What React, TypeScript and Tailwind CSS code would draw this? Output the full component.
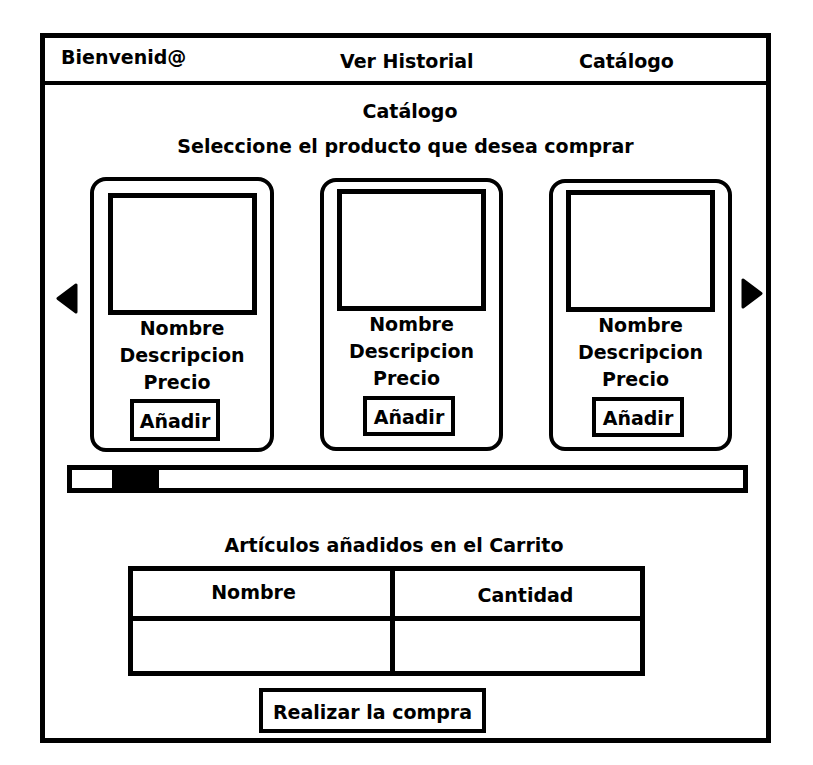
const cards = [
  { key: "a", box: "mt-0 h-[275px] w-[184px]", img: "mt-[12px]", btn: "ml-[36px] h-[42px] w-[90px] mt-[3px]" },
  { key: "b", box: "mt-[1px] h-[273px] w-[183px]", img: "mt-[7px]", btn: "ml-[39px] h-[40px] w-[92px] mt-[4px]" },
  { key: "c", box: "mt-[2px] h-[272px] w-[183px]", img: "mt-[7px]", btn: "ml-[39px] h-[40px] w-[92px] mt-[4px]" },
];

function Arrow({ dir }: { dir: "left" | "right" }) {
  return (
    <svg width="22" height="31" viewBox="0 0 22 31" className="block">
      {dir === "left" ? (
        <polygon points="2,15.5 20,2 20,29" fill="black" stroke="black" strokeWidth="3" strokeLinejoin="round" />
      ) : (
        <polygon points="20,15.5 2,2 2,29" fill="black" stroke="black" strokeWidth="3" strokeLinejoin="round" />
      )}
    </svg>
  );
}

function ProductCard({ box, img, btn }: { box: string; img: string; btn: string }) {
  return (
    <div className={`flex flex-col rounded-[16px] border-4 border-black ${box}`}>
      <div className={`mx-auto h-[122px] w-[149px] border-[5px] border-black ${img}`} />
      <div className="text-center leading-[27px]">
        <p>Nombre</p>
        <p>Descripcion</p>
        <p className="pr-[10px]">Precio</p>
      </div>
      <div className={`flex items-center justify-center border-4 border-black pt-[2px] ${btn}`}>
        Añadir
      </div>
    </div>
  );
}

export default function App() {
  return (
    <div className="h-[765px] w-[813px] bg-white pl-[40px] pt-[33px] font-['DejaVu_Sans',sans-serif] text-[19px] font-bold text-black">
      <div className="flex h-[710px] w-[731px] flex-col border-[5px] border-black">
        {/* top bar */}
        <div className="flex h-[47px] items-start border-b-4 border-black pl-[16px] leading-[22px]">
          <span className="w-[279px] pt-[8px]">Bienvenid@</span>
          <span className="w-[239px] pt-[12px]">Ver Historial</span>
          <span className="pt-[12px]">Catálogo</span>
        </div>

        <p className="mt-[15px] pl-[9px] text-center leading-[22px]">Catálogo</p>
        <p className="mt-[13px] text-center leading-[22px]">
          Seleccione el producto que desea comprar
        </p>

        {/* carousel */}
        <div className="mt-[20px] flex items-start pl-[11px]">
          <div className="mt-[106px]">
            <Arrow dir="left" />
          </div>
          <div className="ml-[12px] flex items-start gap-[46px]">
            {cards.map((c) => (
              <ProductCard key={c.key} box={c.box} img={c.img} btn={c.btn} />
            ))}
          </div>
          <div className="ml-[9px] mt-[101px]">
            <Arrow dir="right" />
          </div>
        </div>

        {/* scrollbar */}
        <div className="ml-[22px] mt-[13px] flex h-[28px] w-[681px] border-[5px] border-black">
          <div className="ml-[40px] h-full w-[47px] bg-black" />
        </div>

        <p className="mt-[41px] pr-[23px] text-center leading-[22px]">
          Artículos añadidos en el Carrito
        </p>

        {/* cart table */}
        <div className="ml-[83px] mt-[10px] w-[517px] border-[5px] border-black">
          <div className="flex h-[50px] border-b-[5px] border-black">
            <div className="flex w-[262px] items-center justify-center border-r-[5px] border-black pb-[2px] pr-[16px]">
              Nombre
            </div>
            <div className="flex flex-1 items-center justify-center pl-[16px] pt-[4px]">
              Cantidad
            </div>
          </div>
          <div className="flex h-[50px]">
            <div className="w-[262px] border-r-[5px] border-black" />
            <div className="flex-1" />
          </div>
        </div>

        <div className="ml-[214px] mt-[12px] flex h-[45px] w-[227px] items-center justify-center border-4 border-black pt-[4px]">
          Realizar la compra
        </div>
      </div>
    </div>
  );
}
